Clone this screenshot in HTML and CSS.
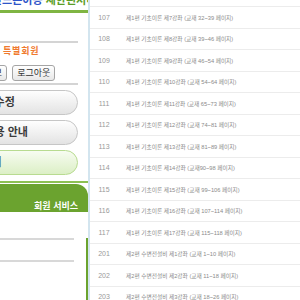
FILE: index.html
```html
<!DOCTYPE html>
<html lang="ko">
<head>
<meta charset="utf-8">
<title>강의 목록</title>
<link rel="stylesheet" href="styles.css">
</head>
<body>
<div class="page">
  <aside class="side">
    <div class="top-title"><span class="tt"><span class="blue">만드는이용</span> <span class="green">제한된서비스</span></span></div>
    <div class="green-rule"></div>
    <div class="panel">
      <div class="rule"></div>
      <div class="grade">특별회원</div>
      <div class="btns"><span class="sbtn">회원정보</span><span class="sbtn">로그아웃</span></div>
      <div class="rule rule-b"></div>
      <div class="pill">회원정보 수정</div>
      <div class="pill">서비스 이용 안내</div>
      <div class="pill pill-green">마이페이지</div>
    </div>
    <div class="svc-head">회원 서비스</div>
    <div class="svc-box">
      <div class="svc-line first"></div>
      <div class="svc-line"></div>
    </div>
  </aside>
  <main class="list">
    <div class="row"><span class="num">107</span><span class="title">제1편 기초이론 제7강좌 (교재 32~39 페이지)</span></div>
    <div class="row"><span class="num">108</span><span class="title">제1편 기초이론 제8강좌 (교재 39~46 페이지)</span></div>
    <div class="row"><span class="num">109</span><span class="title">제1편 기초이론 제9강좌 (교재 46~54 페이지)</span></div>
    <div class="row"><span class="num">110</span><span class="title">제1편 기초이론 제10강좌 (교재 54~64 페이지)</span></div>
    <div class="row"><span class="num">111</span><span class="title">제1편 기초이론 제11강좌 (교재 65~73 페이지)</span></div>
    <div class="row"><span class="num">112</span><span class="title">제1편 기초이론 제12강좌 (교재 74~81 페이지)</span></div>
    <div class="row"><span class="num">113</span><span class="title">제1편 기초이론 제13강좌 (교재 81~89 페이지)</span></div>
    <div class="row"><span class="num">114</span><span class="title">제1편 기초이론 제14강좌 (교재90~98 페이지)</span></div>
    <div class="row"><span class="num">115</span><span class="title">제1편 기초이론 제15강좌 (교재 99~106 페이지)</span></div>
    <div class="row"><span class="num">116</span><span class="title">제1편 기초이론 제16강좌 (교재 107~114 페이지)</span></div>
    <div class="row"><span class="num">117</span><span class="title">제1편 기초이론 제17강좌 (교재 115~118 페이지)</span></div>
    <div class="row"><span class="num">201</span><span class="title">제2편 수변전설비 제1강좌 (교재 1~10 페이지)</span></div>
    <div class="row"><span class="num">202</span><span class="title">제2편 수변전설비 제2강좌 (교재 11~18 페이지)</span></div>
    <div class="row"><span class="num">203</span><span class="title">제2편 수변전설비 제3강좌 (교재 18~26 페이지)</span></div>
  </main>
</div>
</body>
</html>
```
FILE: styles.css
```css
html, body {
  margin: 0;
  background: #fff;
  font-family: "Liberation Sans", "Noto Sans CJK KR", sans-serif;
}
.page {
  display: flex;
  width: 300px;
  height: 300px;
  overflow: hidden;
}
.side {
  width: 88px;
  flex: none;
  overflow: hidden;
}
.top-title {
  height: 10px;
  overflow: hidden;
  white-space: nowrap;
  font-size: 11px;
  font-weight: bold;
}
.tt {
  display: block;
  line-height: 11px;
  margin-top: -5px;
  margin-left: -8px;
}
.blue { color: #2f55c9; }
.green { color: #5a9d26; }
.green-rule {
  height: 3px;
  background: #7fb543;
}
.panel {
  padding-top: 28px;
  padding-bottom: 6px;
  border-bottom: 2px solid #8cc152;
}
.rule {
  height: 2px;
  width: 78px;
  background: #d4d4d4;
}
.rule-b { margin-top: 2px; }
.grade {
  margin-top: 3px;
  padding-left: 3px;
  font-size: 9px;
  line-height: 11px;
  font-weight: bold;
  color: #f07a2e;
  letter-spacing: 0.8px;
}
.btns {
  display: flex;
  gap: 5px;
  margin-top: 8px;
  margin-left: -36px;
}
.sbtn {
  flex: none;
  height: 16px;
  box-sizing: border-box;
  padding: 0 4px;
  border: 1px solid #a5a5a5;
  border-radius: 3px;
  background: linear-gradient(#ffffff, #e8e8e8);
  font-size: 9px;
  line-height: 14px;
  color: #333;
  white-space: nowrap;
}
.pill {
  margin: 5px 10px 0 -60px;
  height: 25px;
  box-sizing: border-box;
  border: 1px solid #c6c6c6;
  border-radius: 13px;
  background: linear-gradient(#fefefe, #e3e3e3);
  padding-left: 10px;
  font-size: 11px;
  line-height: 23px;
  font-weight: bold;
  color: #3a3a3a;
  white-space: nowrap;
}
.pill-green {
  border-color: #b8db90;
  background: linear-gradient(#f7fcf1, #dcefc6);
}
.svc-head {
  margin-top: 1px;
  height: 28px;
  box-sizing: border-box;
  padding: 16px 10px 0 0;
  background: #6ba32f;
  border-radius: 0 12px 0 0;
  color: #fff;
  font-size: 9px;
  line-height: 12px;
  font-weight: bold;
  text-align: right;
  white-space: nowrap;
}
.svc-box {
  height: 78px;
  box-sizing: border-box;
  border-right: 2px solid #6ba32f;
  border-bottom: 2px solid #6ba32f;
}
.svc-line {
  height: 2px;
  width: 74px;
  margin-top: 20px;
  background: #d8d8d8;
}
.svc-line.first { margin-top: 26px; }
.list {
  flex: 1;
  border-left: 2px solid #d3e5ef;
  padding-top: 6px;
  min-width: 0;
}
.row {
  display: flex;
  align-items: center;
  height: 21.5px;
  box-sizing: border-box;
  border-top: 1px solid #ececec;
  white-space: nowrap;
}
.num {
  flex: none;
  width: 28px;
  text-align: center;
  font-size: 7px;
  color: #999;
}
.title {
  margin-left: 8px;
  font-size: 5.7px;
  color: #8a8a8a;
}
```
